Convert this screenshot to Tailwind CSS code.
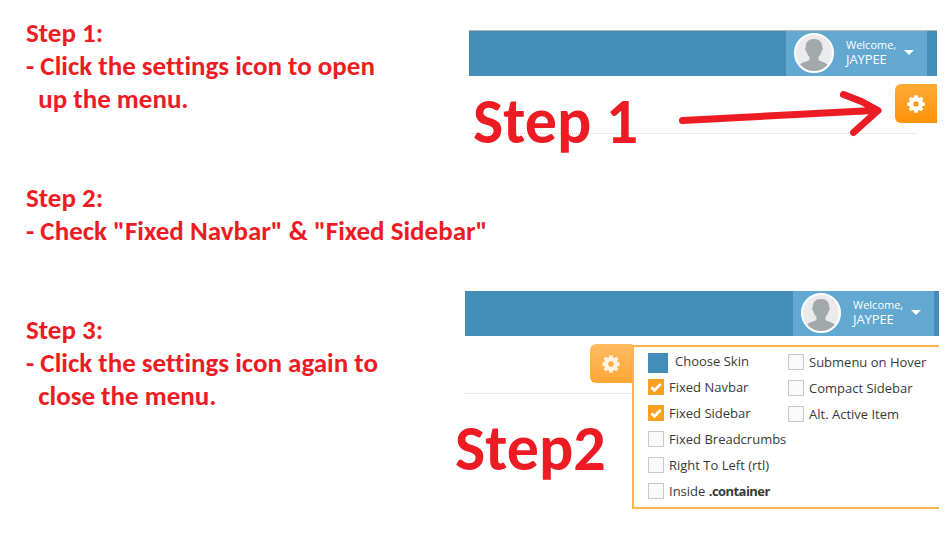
<!DOCTYPE html>
<html lang="en">
<head>
<meta charset="utf-8">
<title>Fixed navbar and sidebar guide</title>
<script src="https://cdn.jsdelivr.net/npm/@tailwindcss/browser@4"></script>
</head>
<body class="relative h-[547px] w-[951px] overflow-hidden bg-white font-['Open_Sans',sans-serif]">
<svg class="hidden">
  <symbol id="gear" viewBox="0 0 18 18">
    <path fill-rule="evenodd" d="M7.300.3h3.400l.5 2.200 1 .4L14.200 1.800 16.400 4 15.100 5.900l.4 1L17.700 7.400v3.300l-2.200.5-.4 1 1.200 1.900-2.200 2.200-1.900-1.200-1 .4L10.700 17.700H7.300l-.5-2.200-1-.4L3.900 16.300 1.700 14.100l1.200-1.900-.4-1L.3 10.700V7.400l2.200-.5.4-1L1.700 4 3.900 1.800l1.900 1.100 1-.4zM9 6.200a2.800 2.800 0 1 0 0 5.600a2.800 2.800 0 1 0 0-5.600z"/>
  </symbol>
  <symbol id="person" viewBox="0 0 36 36">
    <path d="M18 4c5.500 0 8.400 3.400 8.200 8.200 1 .5.700 3.300-.7 4.300-.5 2.500-1.500 4-3 5.300v3c1.500 2 8 2.200 10 6.200V36H3v-5c2-4 9-4.200 10.500-6.200v-3c-1.500-1.300-2.500-2.800-3-5.300-1.400-1-1.700-3.800-.7-4.300C9.600 7.400 12.500 4 18 4z"/>
  </symbol>
  <symbol id="tick" viewBox="0 0 16 16">
    <path d="M3.300 8.200 6.500 11.300 12.700 5" fill="none" stroke="#fff" stroke-width="2.800"/>
  </symbol>
</svg>
<div class="flex h-full">
  <section class="flex w-[456px] shrink-0 flex-col gap-[66px] pt-[16px] pl-[26px] font-[Carlito,Calibri,Lato,sans-serif] text-[27px] leading-[33px] font-bold whitespace-pre text-[#ed1c24] [font-variant-ligatures:none]">
    <div><h2>Step 1:</h2><p>- Click the settings icon to open</p><p>  up the menu.</p></div>
    <div><h2>Step 2:</h2><p>- Check "Fixed Navbar" &amp; "Fixed Sidebar"</p></div>
    <div><h2>Step 3:</h2><p>- Click the settings icon again to</p><p>  close the menu.</p></div>
  </section>

  <main class="flex w-[495px] flex-col pt-[30px]">
    <section class="relative h-[261px]">
      <header class="ml-[13px] flex h-[46px] w-[468px] justify-end border-t border-[#b5b5b0] bg-[#438eb9] pr-[10px]">
        <div class="flex w-[141px] items-start bg-[#62a8d1] pl-2 text-white">
          <div class="mt-[2px] h-10 w-10 shrink-0 overflow-hidden rounded-full border-2 border-white bg-[#ebebeb]"><svg class="h-9 w-9 fill-[#a3a8ab]"><use href="#person"/></svg></div>
          <div class="mt-[7px] ml-[12px] w-[58px]"><p class="text-[11px] leading-[14px]">Welcome,</p><p class="text-[13px] leading-[15px] tracking-[-0.1px]">JAYPEE</p></div>
          <svg class="mt-[19px] h-[5px] w-[10px] fill-white" viewBox="0 0 10 5"><path d="M0 0h10L5 5z"/></svg>
        </div>
      </header>
      <div class="ml-[14px] flex h-[58px] w-[447px] border-b border-dotted border-[#d9d9d9]">
        <h1 class="mt-[6px] ml-[3px] h-[78px] font-[Carlito,Calibri,Lato,sans-serif] text-[64px] leading-[78px] font-bold text-[#ed1c24]">Step 1</h1>
      </div>
      <div class="absolute top-[54px] left-[439px] flex h-[39px] w-[42px] items-center justify-center rounded-l-md bg-linear-to-b from-[#ffaa33] to-[#ff9200]"><svg class="h-[18px] w-[18px] fill-white"><use href="#gear"/></svg></div>
      <svg class="absolute top-[55px] left-[219px] h-[56px] w-[212px] fill-none stroke-[#ed1c24] stroke-[7]" viewBox="0 0 212 56" stroke-linecap="round" stroke-linejoin="round"><path d="M7.500 35.500 198 25.500M168.500 9.500l18 7L203 25.500 178.500 47.500"/></svg>
    </section>

    <section class="relative">
      <header class="ml-[9px] flex h-[45px] w-[474px] justify-end bg-[#438eb9] pr-[5px]">
        <div class="flex w-[141px] items-start bg-[#62a8d1] pl-2 text-white">
          <div class="mt-[2px] h-10 w-10 shrink-0 overflow-hidden rounded-full border-2 border-white bg-[#ebebeb]"><svg class="h-9 w-9 fill-[#a3a8ab]"><use href="#person"/></svg></div>
          <div class="mt-[7px] ml-[12px] w-[58px]"><p class="text-[11px] leading-[14px]">Welcome,</p><p class="text-[13px] leading-[15px] tracking-[-0.1px]">JAYPEE</p></div>
          <svg class="mt-[19px] h-[5px] w-[10px] fill-white" viewBox="0 0 10 5"><path d="M0 0h10L5 5z"/></svg>
        </div>
      </header>
      <div class="flex pt-[9px]">
        <div class="w-[176px] shrink-0">
          <div class="ml-[9px] flex h-[49px] justify-end border-b border-dotted border-[#d9d9d9]">
            <div class="-mt-px flex h-[39px] w-[42px] items-center justify-center rounded-l-md bg-linear-to-b from-[#ffbb60] to-[#ffa632]"><svg class="h-[18px] w-[18px] fill-[#fff3e2]"><use href="#gear"/></svg></div>
          </div>
          <h1 class="mt-[15px] -ml-px font-[Carlito,Calibri,Lato,sans-serif] text-[64px] leading-[78px] font-bold text-[#ed1c24]">Step2</h1>
        </div>
        <div class="flex h-[164px] w-[307px] border-2 border-r-0 border-[#ffb44b] pl-[14px] text-[13px] text-[#393939]">
          <div class="flex w-[140px] shrink-0 flex-col pt-[6px]">
            <div class="flex h-[20px] items-center"><i class="h-5 w-5 bg-[#438eb9]"></i><span class="-mt-[3px] ml-[7px]">Choose Skin</span></div>
            <div class="mt-[2px] flex h-[26px] items-center gap-[5px]"><svg class="-mt-[2px] h-4 w-4 bg-[#f9a021]"><use href="#tick"/></svg>Fixed Navbar</div>
            <div class="flex h-[26px] items-center gap-[5px]"><svg class="-mt-[2px] h-4 w-4 bg-[#f9a021]"><use href="#tick"/></svg>Fixed Sidebar</div>
            <div class="flex h-[26px] items-center gap-[5px] whitespace-nowrap"><i class="-mt-[2px] h-4 w-4 border border-[#c8c8c8] bg-[#fafafa]"></i>Fixed Breadcrumbs</div>
            <div class="flex h-[26px] items-center gap-[5px]"><i class="-mt-[2px] h-4 w-4 border border-[#c8c8c8] bg-[#fafafa]"></i>Right To Left (rtl)</div>
            <div class="flex h-[26px] items-center gap-[5px]"><i class="-mt-[2px] h-4 w-4 border border-[#c8c8c8] bg-[#fafafa]"></i><span>Inside <b class="tracking-[-0.55px]">.container</b></span></div>
          </div>
          <div class="flex flex-col pt-[3px] whitespace-nowrap">
            <div class="flex h-[26px] items-center gap-[5px]"><i class="-mt-[2px] h-4 w-4 border border-[#c8c8c8] bg-[#fafafa]"></i>Submenu on Hover</div>
            <div class="flex h-[26px] items-center gap-[5px]"><i class="-mt-[2px] h-4 w-4 border border-[#c8c8c8] bg-[#fafafa]"></i>Compact Sidebar</div>
            <div class="flex h-[26px] items-center gap-[5px]"><i class="-mt-[2px] h-4 w-4 border border-[#c8c8c8] bg-[#fafafa]"></i>Alt. Active Item</div>
          </div>
        </div>
      </div>
    </section>
  </main>
</div>
</body>
</html>
